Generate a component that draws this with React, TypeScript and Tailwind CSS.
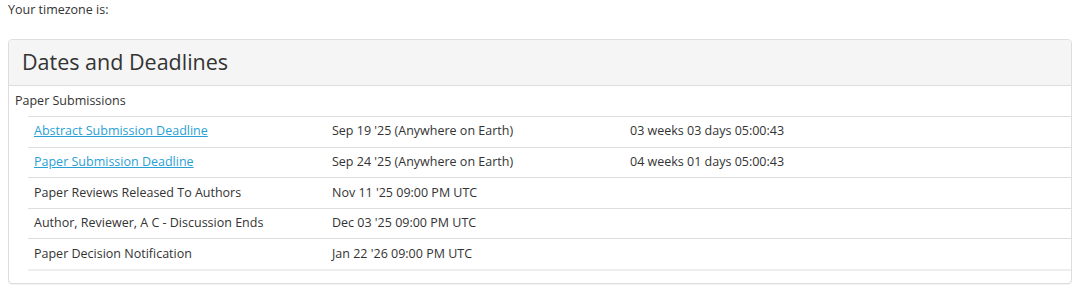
import React from 'react';

type Row = {
  name: string;
  link?: boolean;
  date: string;
  left?: string;
};

const rows: Row[] = [
  {
    name: 'Abstract Submission Deadline',
    link: true,
    date: "Sep 19 '25 (Anywhere on Earth)",
    left: '03 weeks 03 days 05:00:43',
  },
  {
    name: 'Paper Submission Deadline',
    link: true,
    date: "Sep 24 '25 (Anywhere on Earth)",
    left: '04 weeks 01 days 05:00:43',
  },
  { name: 'Paper Reviews Released To Authors', date: "Nov 11 '25 09:00 PM UTC" },
  { name: 'Author, Reviewer, A C - Discussion Ends', date: "Dec 03 '25 09:00 PM UTC" },
  { name: 'Paper Decision Notification', date: "Jan 22 '26 09:00 PM UTC" },
];

export default function App() {
  return (
    <div className="min-h-[290px] bg-white px-2 text-[12.5px] text-[#333] [font-family:'Open_Sans',sans-serif]">
      <p className="pt-[1px] leading-[17px]">Your timezone is:</p>

      <div className="mt-[21px] rounded-[4px] border border-[#ddd] bg-white shadow-[0_1px_1px_rgba(0,0,0,0.05)]">
        <div className="rounded-t-[3px] border-b border-[#ddd] bg-[#f5f5f5] px-[13px] pt-[8px] pb-[10px]">
          <h3 className="text-[21.5px] leading-[27px] text-[#333]">Dates and Deadlines</h3>
        </div>

        <div className="flex h-[30px] items-center px-[6px]">Paper Submissions</div>

        <div className="pl-[19px] pb-[12px]">
          <div className="border-b-2 border-[#eee]">
            {rows.map((r) => (
              <div
                key={r.name}
                className="grid h-[30.6px] grid-cols-[298px_298px_1fr] items-center border-t border-[#ddd]"
              >
                <div className="px-[6px]">
                  {r.link ? (
                    <a href="#" className="text-[#2a9fd6] underline">
                      {r.name}
                    </a>
                  ) : (
                    r.name
                  )}
                </div>
                <div className="px-[6px]">{r.date}</div>
                <div className="px-[6px]">{r.left}</div>
              </div>
            ))}
          </div>
        </div>
      </div>
    </div>
  );
}
